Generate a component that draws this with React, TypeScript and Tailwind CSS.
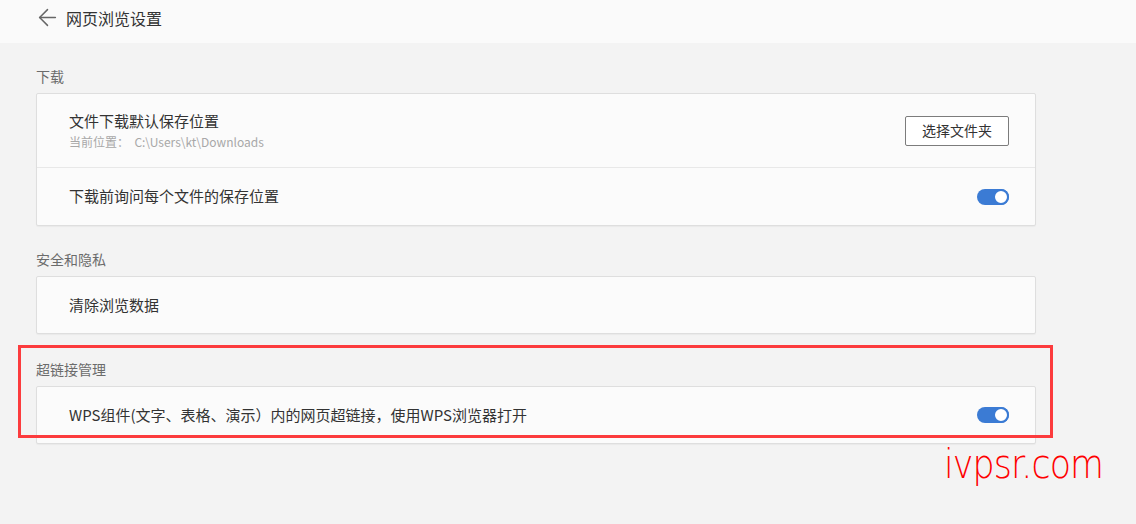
import { ArrowLeft } from "lucide-react";

const font = { fontFamily: '"Microsoft YaHei", "Noto Sans CJK SC", "Noto Sans", sans-serif' };

function Toggle() {
    return (
        <div className="w-[32px] h-[16px] rounded-full bg-[#3b7bd4] relative flex items-center justify-end">
            <div className="w-[16px] h-[16px] rounded-full bg-white border-[2px] border-[#3b7bd4]" />
        </div>
    );
}

function SectionLabel({ text, top }: { text: string; top: string }) {
    return (
        <div className={`${top} mb-[8px] h-[18px] text-[14px] leading-[18px] text-[#6b6b6b]`}>
            {text}
        </div>
    );
}

export default function App() {
    return (
        <div className="relative w-[1136px] h-[524px] bg-[#f3f3f3] overflow-hidden" style={font}>
            {/* Header */}
            <div className="h-[43px] bg-[#fafafa] flex items-center pl-[34px] pb-[8px]">
                <ArrowLeft className="w-[27px] h-[27px] text-[#666666]" strokeWidth={1.3} />
                <span className="ml-[5px] text-[16px] text-[#333333]">网页浏览设置</span>
            </div>

            <div className="ml-[36px] w-[1000px]">
                {/* 下载 */}
                <SectionLabel text="下载" top="mt-[24px]" />
                <div className="bg-[#fbfbfb] border border-[#dedede] rounded-[2px] shadow-[0_1px_1px_rgba(0,0,0,0.04)]">
                    <div className="h-[74px] flex items-center justify-between pl-[32px] pr-[26px] border-b border-[#e8e8e8]">
                        <div className="flex flex-col">
                            <span className="text-[15px] leading-[20px] text-[#333333]">文件下载默认保存位置</span>
                            <span className="text-[12px] leading-[18px] text-[#a8a8a8] mt-[2px]">
                                当前位置：&nbsp;&nbsp;C:\Users\kt\Downloads
                            </span>
                        </div>
                        <button className="w-[104px] h-[30px] border border-[#7c7c7c] rounded-[2px] bg-white text-[14px] text-[#333333]">
                            选择文件夹
                        </button>
                    </div>
                    <div className="h-[57px] flex items-center justify-between pl-[32px] pr-[26px]">
                        <span className="text-[15px] text-[#333333]">下载前询问每个文件的保存位置</span>
                        <Toggle />
                    </div>
                </div>

                {/* 安全和隐私 */}
                <SectionLabel text="安全和隐私" top="mt-[24px]" />
                <div className="bg-[#fbfbfb] border border-[#dedede] rounded-[2px] shadow-[0_1px_1px_rgba(0,0,0,0.04)] h-[58px] flex items-center pl-[32px]">
                    <span className="text-[15px] text-[#333333]">清除浏览数据</span>
                </div>

                {/* 超链接管理 */}
                <SectionLabel text="超链接管理" top="mt-[26px]" />
                <div className="bg-[#fbfbfb] border border-[#dedede] rounded-[2px] shadow-[0_1px_1px_rgba(0,0,0,0.04)] h-[58px] flex items-center justify-between pl-[32px] pr-[26px]">
                    <span className="text-[15px] text-[#333333]">WPS组件(文字、表格、演示）内的网页超链接，使用WPS浏览器打开</span>
                    <Toggle />
                </div>
            </div>

            {/* Annotation box */}
            <div className="absolute left-[18px] top-[345px] w-[1035px] h-[93px] border-[3px] border-[#fc3b3d]" />

            {/* Watermark */}
            <div
                className="absolute left-[944px] top-[440px] text-[40px] leading-[48px] text-[#ff0000] tracking-[-1px] scale-x-[0.87] origin-left"
                style={{ fontFamily: '"DejaVu Sans", sans-serif', fontWeight: 200, fontStretch: "condensed" }}
            >
                ivpsr.com
            </div>
        </div>
    );
}
